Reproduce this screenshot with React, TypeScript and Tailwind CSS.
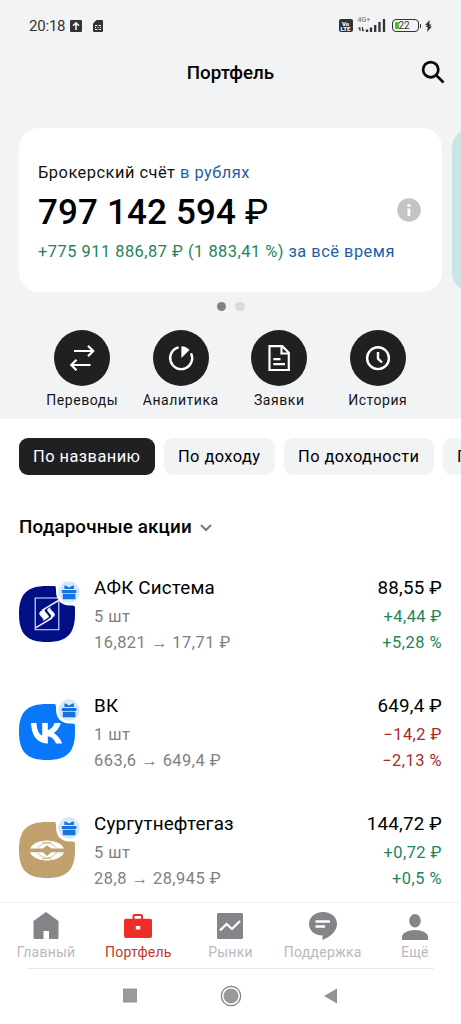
import type { ReactNode } from "react";

const actions = [
  { label: "Переводы", icon: <TransferIcon /> },
  { label: "Аналитика", icon: <AnalyticsIcon /> },
  { label: "Заявки", icon: <OrdersIcon /> },
  { label: "История", icon: <HistoryIcon /> },
];

const stocks = [
  {
    name: "АФК Система",
    count: "5 шт",
    from: "16,821",
    to: "17,71 ₽",
    price: "88,55 ₽",
    diff: "+4,44 ₽",
    percent: "+5,28 %",
    up: true,
    color: "#000f85",
    logo: <SistemaLogo />,
  },
  {
    name: "ВК",
    count: "1 шт",
    from: "663,6",
    to: "649,4 ₽",
    price: "649,4 ₽",
    diff: "−14,2 ₽",
    percent: "−2,13 %",
    up: false,
    color: "#0878fa",
    logo: <VkLogo />,
  },
  {
    name: "Сургутнефтегаз",
    count: "5 шт",
    from: "28,8",
    to: "28,945 ₽",
    price: "144,72 ₽",
    diff: "+0,72 ₽",
    percent: "+0,5 %",
    up: true,
    color: "#c0a06c",
    logo: <SurgutLogo />,
  },
];

function TransferIcon() {
  return (
    <svg className="h-14 w-14" viewBox="0 0 56 56" fill="none" stroke="#fff" strokeWidth="2.2">
      <path d="M20 21H39M34 15.8L39.2 21L34 26.2M36.5 35H17.5M22.5 29.8L17.3 35L22.5 40.2" />
    </svg>
  );
}

function AnalyticsIcon() {
  return (
    <svg className="h-14 w-14" viewBox="0 0 56 56" fill="none" stroke="#fff" strokeWidth="2.4">
      <path d="M25.6 17.4A11 11 0 1 0 38 23.2" />
      <path d="M28.4 16.2V28L36.5 20A11.5 11.5 0 0 0 28.4 16.2Z" fill="#fff" stroke="none" />
    </svg>
  );
}

function OrdersIcon() {
  return (
    <svg className="h-14 w-14" viewBox="0 0 56 56" fill="none" stroke="#fff" strokeWidth="2.2">
      <path d="M18.5 16.2H31.3L37.8 22.7V40H18.5Z" />
      <path d="M30.5 16.5V23.5H37.5M22.3 29.2H29.5M22.3 34.2H34" />
    </svg>
  );
}

function HistoryIcon() {
  return (
    <svg className="h-14 w-14" viewBox="0 0 56 56" fill="none" stroke="#fff" strokeWidth="2.4">
      <circle cx="28" cy="28.2" r="10.9" />
      <path d="M28 22V28.7L32 32.5" />
    </svg>
  );
}

function SistemaLogo() {
  return (
    <g>
      <path d="M16.2 12H39.8V43.8H16.2Z" fill="none" stroke="#e7e9f6" strokeWidth="1.1" />
      <path d="M39.5 14.5L23 24.3M16.5 41.8L33 32" fill="none" stroke="#e7e9f6" strokeWidth="1.5" />
      <path d="M29 20.7L21.6 25.2Q19.2 27 21 29.2L24.2 33Q25 34 23.5 35.2L29.5 31.6Q30.5 30.6 29.4 29.4L25.8 25.2Q25 24 26.5 22.8Z" fill="#fff" />
      <path d="M31.5 21Q27 23.4 28.6 25.2L31.8 29Q32.5 30.2 31.5 31.5L26.5 36L34 31.3Q37 29.2 35.2 27L31.5 23.2Q30.8 22 31.5 21Z" fill="#fff" />
    </g>
  );
}

function VkLogo() {
  return (
    <path
      d="M12 19H17.5C18 27 20.5 30.5 23.2 31.6V19H28.8V26.1C31.5 25.6 34.5 22.5 35.5 19H41.8C40.5 23.5 37.8 27 34.8 29C38 31 41.5 34.5 43.2 39.5H37C35.5 35.5 32.5 33 28.8 32.3V39.5H27.2C17.5 38.5 12.5 31 12 19Z"
      fill="#fff"
    />
  );
}

function SurgutLogo() {
  return (
    <g>
      <ellipse cx="28" cy="28.5" rx="17.2" ry="9.9" fill="#fff" />
      <path d="M10 26.6H24L28 23.3L32.3 26.6H46V30.3H32.3L28 34L24 30.3H10Z" fill="#c0a06c" />
      <path d="M18 26.5Q22 20.8 33 20M38 30.5Q34 36.2 23 37M23 20Q34 20.8 38 26.5M18 30.5Q22 36.2 33 37" fill="none" stroke="#c0a06c" strokeWidth="0.7" />
    </g>
  );
}

function GiftBadge() {
  return (
    <svg className="absolute -top-[5.5px] left-[39px] h-[22px] w-[22px]" viewBox="0 0 22 22">
      <circle cx="11" cy="11" r="10.7" fill="#d6e9fb" />
      <path d="M3.8 9H18.4V12H3.8ZM4.8 12.7H17.4V18.2H4.8Z" fill="#1672dc" />
      <path d="M6.4 4.6Q8.5 4 10.3 6.3H12Q13.800 4 15.9 4.6V8H6.4Z" fill="#1672dc" />
    </svg>
  );
}

function StockLogo({ color, children }: { color: string; children: ReactNode }) {
  return (
    <div className="relative h-14 w-14 shrink-0">
      <svg className="h-14 w-14" viewBox="0 0 56 56">
        <path
          d="M28 0H35.5C37 0 37 2 37 5C37 14 42 19.5 51 19.5C54 19.5 56 19.5 56 21.5V28C56 48 48 56 28 56S0 48 0 28S8 0 28 0Z"
          fill={color}
        />
        {children}
      </svg>
      <GiftBadge />
    </div>
  );
}

function StatusBar() {
  return (
    <div className="flex h-[50px] items-center pt-px text-[#333]">
      <span className="ml-[29px] w-[41px] text-[15px] leading-5 tracking-[-0.2px]">20:18</span>
      <svg className="h-3 w-3" viewBox="0 0 12 12">
        <rect width="12" height="12" rx="1" fill="#333" />
        <path d="M6 10V3M3 5.7L6 2.7L9 5.7" fill="none" stroke="#fff" strokeWidth="1.5" />
      </svg>
      <svg className="ml-[11px] h-3 w-[10px]" viewBox="0 0 10 12">
        <path d="M3.5 0H9Q10 0 10 1V11Q10 12 9 12H1Q0 12 0 11V3.5Z" fill="#333" />
        <path d="M2 5.5H4.300M5.700 5.500H8M2 7.500H3M4.500 7.500H5.500M7 7.500H8M2 9.500H4.300M5.700 9.500H8" stroke="#fff" strokeWidth="1" />
      </svg>
      <div className="ml-auto flex h-[13px] w-[14px] flex-col items-center justify-center rounded-[2px] bg-[#333] text-[6px] leading-[5px] font-black text-white">
        <span>Vo</span>
        <span>LTE</span>
      </div>
      <div className="relative ml-[5px] h-[15px] w-[28px]">
        <span className="absolute -top-[2px] left-0 text-[7px] leading-[8px] text-[#666]">4G+</span>
        <svg className="h-[15px] w-[28px]" viewBox="0 0 28 15">
          <path d="M2 9.5V13M0.5 11L2 9.3M4.5 9V13M6 11.5L4.5 13.2" fill="none" stroke="#333" strokeWidth="1.1" />
          <path d="M9 14V11.5M13 14V9.5M17.2 14V7M21.5 14V4M26 14V1" stroke="#333" strokeWidth="2.3" />
        </svg>
      </div>
      <div className="ml-[6px] flex h-[13px] w-[27px] items-center rounded-[4px] border-[1.5px] border-[#333] pl-[2px]">
        <span className="h-[7px] w-1 shrink-0 rounded-[1px] bg-[#4bc22d]" />
        <span className="text-[10px] leading-[10px]">22</span>
      </div>
      <span className="ml-px h-1 w-[1.5px] bg-[#333]" />
      <svg className="mr-[29px] ml-[4px] h-3 w-[7px]" viewBox="0 0 7 12">
        <path d="M4.8 0L0 5H2.4L0.500 7H2.800L2 12L7 6.500H4.700L6.500 4.500H4.200Z" fill="#333" />
      </svg>
    </div>
  );
}

function AccountCard() {
  return (
    <div className="flex gap-[10px] overflow-hidden pl-[19px]">
      <div className="flex h-[164px] w-[423px] shrink-0 items-center justify-between rounded-[20px] bg-white pr-[21px] pl-[19px]">
        <div className="pt-[4px] whitespace-nowrap">
          <p className="text-[16.4px] leading-6 tracking-[0.5px] text-[#111]">
            Брокерский счёт <span className="text-[#1d5fa8]">в рублях</span>
          </p>
          <p className="mt-[3px] text-[35px] leading-[50px] font-medium tracking-[0.15px] text-black">
            797 142 594 <span className="font-normal">₽</span>
          </p>
          <p className="mt-[2px] text-[16.4px] leading-6 tracking-[0.5px] text-[#22845a]">
            +775 911 886,87 ₽ (1 883,41 %) <span className="text-[#1d5fa8]">за всё время</span>
          </p>
        </div>
        <svg className="-ml-10 h-6 w-6 shrink-0" viewBox="0 0 24 24">
          <circle cx="12" cy="12" r="11.8" fill="#c4c4c6" />
          <path d="M10.3 10.5H13.3V18H10.6V12.5H10.3ZM10.4 6H13.4V8.8H10.4Z" fill="#fff" />
        </svg>
      </div>
      <div className="h-[164px] w-[423px] shrink-0 rounded-[20px] bg-[#cbe5e4]" />
    </div>
  );
}

function TabBar() {
  return (
    <nav className="h-[122px] border-t border-[#f0f0f0] bg-white text-[14px] leading-5 tracking-[0.25px] text-[#b9b9bb]">
      <div className="grid h-[65px] grid-cols-5 pt-[7px]">
        <div className="flex flex-col items-center">
          <svg className="h-8 w-8" viewBox="0 0 32 32">
            <path d="M16 2L28.5 11V27.5Q28.5 29 27 29H19V21H13.5V29H5Q3.5 29 3.5 27.5V11Z" fill="#858589" />
          </svg>
          <span>Главный</span>
        </div>
        <div className="flex flex-col items-center text-[#bc3831]">
          <svg className="h-8 w-8" viewBox="0 0 32 32">
            <path d="M11.5 9V6Q11.5 5 12.5 5H19Q20 5 20 6V9" fill="none" stroke="#eb2e25" strokeWidth="2" />
            <path d="M4 8.8H28Q30 8.8 30 10.8V26Q30 28 28 28H4Q2 28 2 26V10.8Q2 8.8 4 8.8ZM13.8 16V19.5H18.3V16Z" fill="#f02d24" />
          </svg>
          <span>Портфель</span>
        </div>
        <div className="flex flex-col items-center">
          <svg className="h-8 w-8" viewBox="0 0 32 32">
            <rect x="3" y="3" width="26" height="26" rx="1.5" fill="#858589" />
            <path d="M6 20.5L12.5 14L18 19L26 11" fill="none" stroke="#fff" strokeWidth="2.3" />
          </svg>
          <span>Рынки</span>
        </div>
        <div className="flex flex-col items-center">
          <svg className="h-8 w-8" viewBox="0 0 32 32">
            <path d="M16 2C24 2 30 7 30 13.5C30 21 24 26.5 15.5 30V25.5C7.5 25.5 2 20.5 2 14C2 7 8 2 16 2Z" fill="#858589" />
            <path d="M8.5 11.5H23M8.5 16.5H18" stroke="#fff" strokeWidth="2.3" />
          </svg>
          <span>Поддержка</span>
        </div>
        <div className="flex flex-col items-center">
          <svg className="h-8 w-8" viewBox="0 0 32 32">
            <ellipse cx="16" cy="10.7" rx="5.8" ry="6.7" fill="#858589" />
            <path d="M3 30V27C3 23 9 20 16 20S29 23 29 27V30Z" fill="#858589" />
          </svg>
          <span>Ещё</span>
        </div>
      </div>
      <div className="mx-[27px] h-px bg-[#e9e9e9]" />
      <div className="flex h-[54px] items-center justify-center">
        <svg className="h-[22px] w-[216px]" viewBox="0 0 216 22">
          <rect x="0.5" y="4" width="13" height="13" fill="#9a9a9a" stroke="#898989" strokeWidth="0.8" />
          <circle cx="108" cy="11" r="9.7" fill="none" stroke="#858585" strokeWidth="1.3" />
          <circle cx="108" cy="11" r="7" fill="#999" stroke="#888" strokeWidth="0.8" />
          <path d="M201 11L214 3.5V18.5Z" fill="#929292" />
        </svg>
      </div>
    </nav>
  );
}

export default function App() {
  return (
    <div className="flex h-[1024px] w-[461px] flex-col overflow-hidden bg-white font-['Roboto',sans-serif] text-black">
      <header className="h-[419px] shrink-0 bg-[#f2f3f5]">
        <StatusBar />
        <div className="grid h-[78px] grid-cols-[1fr_auto_1fr] items-start pt-[9px]">
          <h1 className="col-start-2 text-[18.8px] leading-7 font-medium">Портфель</h1>
          <svg className="mt-[1px] mr-[16px] h-6 w-6 justify-self-end" viewBox="0 0 24 24" fill="none" stroke="#0a0a0a" strokeWidth="2.7">
            <circle cx="9.7" cy="9.7" r="7.6" />
            <path d="M15 15L22.5 22.5" />
          </svg>
        </div>
        <AccountCard />
        <div className="mt-[9.5px] flex justify-center gap-[9px]">
          <span className="h-[9.5px] w-[9.5px] rounded-full bg-[#828286]" />
          <span className="h-[9.5px] w-[9.5px] rounded-full bg-[#d8d9db]" />
        </div>
        <div className="mt-[19px] ml-[33px] grid w-[394px] grid-cols-4">
          {actions.map((action) => (
            <div key={action.label} className="flex flex-col items-center">
              <div className="h-14 w-14 rounded-full bg-[#202022]">{action.icon}</div>
              <span className="mt-[4px] text-[14px] leading-5 tracking-[0.55px] text-[#151515]">{action.label}</span>
            </div>
          ))}
        </div>
      </header>

      <main className="h-[483px] shrink-0 overflow-hidden">
        <div className="mt-[19px] flex gap-[9.5px] overflow-hidden pl-[19px] text-[16.4px] leading-[37px] tracking-[0.45px] whitespace-nowrap">
          <button className="w-[135.5px] shrink-0 rounded-[9px] bg-[#202022] text-white">По названию</button>
          <button className="w-[110.5px] shrink-0 rounded-[9px] bg-[#f2f3f5]">По доходу</button>
          <button className="w-[149.5px] shrink-0 rounded-[9px] bg-[#f2f3f5]">По доходности</button>
          <button className="w-[110px] shrink-0 rounded-[9px] bg-[#f2f3f5] pl-[14px] text-left">П</button>
        </div>

        <div className="mt-[38px] ml-[19px] flex items-center">
          <h2 className="text-[18.8px] leading-7 font-medium tracking-[0.15px]">Подарочные акции</h2>
          <svg className="mt-px ml-[8px] h-[8px] w-[12px]" viewBox="0 0 12 8" fill="none" stroke="#77777a" strokeWidth="2">
            <path d="M1 1L6 6L11 1" />
          </svg>
        </div>

        <div className="mt-[33px]">
          {stocks.map((stock) => (
            <div key={stock.name} className="flex h-[118px] items-start pr-[19px] pl-[19px]">
              <div className="mt-[12px]">
                <StockLogo color={stock.color}>{stock.logo}</StockLogo>
              </div>
              <div className="ml-[19px] text-[16.4px] leading-[26px] tracking-[0.5px] text-[#808083]">
                <p className="text-[18.8px] leading-7 tracking-[0.2px] text-black">{stock.name}</p>
                <p className="mt-[2px]">{stock.count}</p>
                <p className="whitespace-nowrap">
                  {stock.from} <span className="font-['Liberation_Sans'] leading-none">→</span> {stock.to}
                </p>
              </div>
              <div className="ml-auto text-right text-[16.4px] leading-[26px] tracking-[0.5px]">
                <p className="text-[18.8px] leading-7 tracking-[0.2px]">{stock.price}</p>
                <div className={stock.up ? "mt-[2px] text-[#22845a]" : "mt-[2px] text-[#a52c26]"}>
                  <p>{stock.diff}</p>
                  <p>{stock.percent}</p>
                </div>
              </div>
            </div>
          ))}
        </div>
      </main>

      <TabBar />
    </div>
  );
}
